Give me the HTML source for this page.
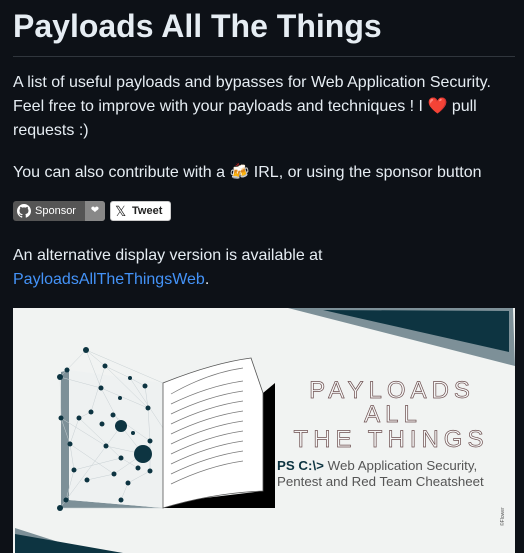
<!DOCTYPE html>
<html><head><meta charset="utf-8"><style>
body{margin:0;background:#0d1117;color:#e6edf3;font-family:"Liberation Sans",sans-serif;width:524px;height:553px;overflow:hidden;position:relative}
h1{position:absolute;left:13px;top:6px;margin:0;font-size:32px;font-weight:bold;line-height:40px}
.hr{position:absolute;left:13px;top:56px;width:502px;height:1px;background:#30363d}
p{position:absolute;left:13px;margin:0;font-size:16px;line-height:24px;width:505px}
a{color:#4493f8}
.badge{position:absolute;top:201px;height:20px;border-radius:3px;font-size:11px;line-height:20px}
</style></head><body>
<h1>Payloads All The Things</h1>
<div class="hr"></div>
<p style="top:71px">A list of useful payloads and bypasses for Web Application Security. Feel free to improve with your payloads and techniques ! I <span style="color:#e0302a">❤️</span> pull requests :)</p>
<p style="top:161px">You can also contribute with a 🍻 IRL, or using the sponsor button</p>
<div class="badge" style="left:13px;width:92px;background:#555;overflow:hidden;color:#fff">
<svg style="position:absolute;left:4px;top:3px" width="14" height="14" viewBox="0 0 16 16"><path fill="#fff" d="M8 0C3.6 0 0 3.6 0 8c0 3.5 2.3 6.5 5.5 7.6.4.1.5-.2.5-.4v-1.4c-2.2.5-2.7-1-2.7-1-.4-.9-.9-1.2-.9-1.2-.7-.5.1-.5.1-.5.8.1 1.2.8 1.2.8.7 1.3 1.9.9 2.3.7.1-.5.3-.9.5-1.1-1.8-.2-3.6-.9-3.6-4 0-.9.3-1.6.8-2.1-.1-.2-.4-1 .1-2.1 0 0 .7-.2 2.2.8.6-.2 1.3-.3 2-.3s1.4.1 2 .3c1.5-1 2.2-.8 2.2-.8.4 1.1.2 1.9.1 2.1.5.6.8 1.3.8 2.1 0 3.1-1.9 3.7-3.6 3.9.3.3.5.8.5 1.5v2.2c0 .2.1.5.6.4C13.7 14.5 16 11.5 16 8c0-4.4-3.6-8-8-8z"/></svg>
<span style="position:absolute;left:22px">Sponsor</span>
<span style="position:absolute;left:72px;width:20px;height:20px;background:#888;text-align:center;font-size:10px">❤</span></div>
<div class="badge" style="left:110px;width:61px;background:#fff;color:#222;border:1px solid #ccc;box-sizing:border-box;font-weight:bold;line-height:18px">
<span style="position:absolute;left:4px;font-size:14px;font-weight:normal">𝕏</span><span style="position:absolute;left:21px">Tweet</span></div>
<p style="top:244px">An alternative display version is available at <a>PayloadsAllTheThingsWeb</a>.</p>
<svg style="position:absolute;left:13px;top:308px" width="502" height="245" viewBox="0 0 502 245">
<rect width="502" height="245" fill="#f1f3f2"/>
<polygon points="275,0 500,0 502,58" fill="#7d9098"/>
<polygon points="310,2 496,3 496,44" fill="#0d3441"/>
<polygon points="2,220 80,245 2,245" fill="#7d9098"/>
<polygon points="2,226 110,245 2,245" fill="#0d3441"/>
<polygon points="48,64 56,62 56,192 150,200 48,200" fill="#7d9098"/>
<polygon points="56,62 150,75 150,200 56,192" fill="#eef1f1"/>
<g stroke="#c8d0d3" stroke-width="0.5" fill="none">
<path d="M73,42 L47,69 L48,110 L57,136 L61,162 L53,192 L47,200 M73,42 L92,58 L117,70 L132,78 L135,100 L137,133 L137,163 L115,175 L108,192 M47,69 L88,80 L108,118 L130,146 L101,166 L74,172 M92,58 L78,104 L66,110 L57,136 M88,80 L135,100 M100,107 L137,133 M61,162 L108,150 L125,160 M48,110 L93,138 L130,146 M73,42 L150,75 M47,200 L150,200 M53,192 L108,118 M117,70 L150,120 M73,42 L88,80 M66,110 L108,150 M57,136 L101,166 M92,58 L135,100"/></g>
<polygon points="150,195 250,183 250,85 262,75 262,200 150,200" fill="#000"/>
<path d="M150,200 L150,75 Q200,55 238,50 L250,85 L250,183 Q200,185 150,200Z" fill="#fff" stroke="#555" stroke-width="0.8"/>
<g stroke="#777" stroke-width="0.7" fill="none">
<path d="M158,86 Q195,65 230,60"/><path d="M158,96 Q195,78 230,73"/><path d="M158,106 Q195,88 230,83"/><path d="M158,116 Q195,98 230,93"/><path d="M158,126 Q195,108 230,103"/><path d="M158,136 Q195,118 230,113"/><path d="M158,146 Q195,128 230,123"/><path d="M158,156 Q195,138 230,133"/><path d="M158,166 Q195,148 230,143"/><path d="M158,176 Q195,158 230,153"/></g>
<g fill="#0d3441">
<circle cx="108" cy="118" r="6"/><circle cx="130" cy="146" r="9"/><circle cx="73" cy="42" r="3"/><circle cx="47" cy="69" r="3"/><circle cx="54" cy="62" r="2.5"/><circle cx="92" cy="58" r="2.5"/><circle cx="88" cy="80" r="2.5"/><circle cx="107" cy="90" r="2"/><circle cx="100" cy="107" r="2.5"/><circle cx="78" cy="104" r="2.5"/><circle cx="66" cy="110" r="2.5"/><circle cx="89" cy="116" r="2.5"/><circle cx="57" cy="136" r="2.5"/><circle cx="61" cy="162" r="2.5"/><circle cx="74" cy="172" r="2.5"/><circle cx="101" cy="166" r="2.5"/><circle cx="115" cy="175" r="2.5"/><circle cx="125" cy="160" r="2.5"/><circle cx="137" cy="133" r="2.5"/><circle cx="135" cy="100" r="2.5"/><circle cx="132" cy="78" r="2.5"/><circle cx="117" cy="70" r="2"/><circle cx="108" cy="150" r="2.5"/><circle cx="93" cy="138" r="2.5"/><circle cx="48" cy="110" r="2.5"/><circle cx="108" cy="192" r="2.5"/><circle cx="53" cy="192" r="2.5"/><circle cx="47" cy="200" r="3"/><circle cx="137" cy="163" r="2.5"/><circle cx="120" cy="125" r="2"/></g>
<g fill="#f7f7f7" stroke="#6b4e4e" stroke-width="0.7" font-family="Liberation Sans,sans-serif" font-size="24" letter-spacing="5" text-anchor="middle">
<text x="379" y="90">PAYLOADS</text>
<text x="380" y="114">ALL</text>
<text x="378" y="139">THE  THINGS</text></g>
<text x="264" y="162" font-family="Liberation Sans,sans-serif" font-size="13.3" fill="#555"><tspan fill="#0d3441" font-weight="bold">PS C:\&gt;</tspan> Web Application Security,</text>
<text x="264" y="178" font-family="Liberation Sans,sans-serif" font-size="13.3" fill="#555">Pentest and Red Team Cheatsheet</text>
<text x="491" y="218" font-family="Liberation Sans,sans-serif" font-size="5" fill="#555" transform="rotate(-90 491 218)">©Flower</text>
</svg>
</body></html>
